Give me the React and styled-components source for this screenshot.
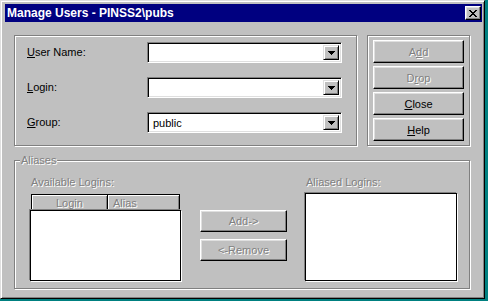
import React from 'react';
import styled, { createGlobalStyle } from 'styled-components';

const GlobalStyle = createGlobalStyle`
  body {
    margin: 0;
    background: #008080;
    font-family: "Liberation Sans", Arial, sans-serif;
    font-size: 11px;
  }
`;

const Window = styled.div`
  box-sizing: border-box;
  width: 485px;
  height: 299px;
  background: #c0c0c0;
  border: 1px solid;
  border-color: #dfdfdf #000 #000 #dfdfdf;
  box-shadow: inset 1px 1px #fff, inset -1px -1px #808080;
  padding: 3px 2px 2px 4px;
  display: flex;
  flex-direction: column;
`;

const TitleBar = styled.div`
  height: 18px;
  background: #000080;
  display: flex;
  align-items: center;
  justify-content: space-between;
  padding: 0 1px 0 2px;
`;

const Title = styled.span`
  color: #fff;
  font-weight: bold;
  font-size: 12px;
  white-space: nowrap;
`;

const CloseBox = styled.div`
  box-sizing: border-box;
  width: 16px;
  height: 14px;
  background: #c0c0c0;
  border: 1px solid;
  border-color: #fff #000 #000 #fff;
  box-shadow: inset -1px -1px #808080, inset 1px 1px #dfdfdf;
  display: flex;
  align-items: center;
  justify-content: center;
`;

const Client = styled.div`
  padding: 13px 0 0 9px;
  display: flex;
  flex-direction: column;
`;

const TopRow = styled.div`
  display: flex;
  gap: 10px;
`;

const Etched = styled.div`
  box-sizing: border-box;
  border: 1px solid #808080;
  box-shadow: inset 1px 1px #fff, 1px 1px #fff;
`;

const FieldsBox = styled(Etched)`
  width: 343px;
  height: 111px;
  padding: 6px 14px 0 12px;
  display: flex;
  flex-direction: column;
  gap: 14px;
`;

const FieldRow = styled.div`
  display: grid;
  grid-template-columns: 120px 195px;
  align-items: center;
  height: 21px;
`;

const Label = styled.span`
  color: ${(p) => (p.disabled ? '#808080' : '#000')};
  text-shadow: ${(p) => (p.disabled ? '1px 1px #fff' : 'none')};
  line-height: 13px;
  white-space: nowrap;
`;

const Combo = styled.div`
  box-sizing: border-box;
  height: 21px;
  background: #fff;
  border: 1px solid;
  border-color: #808080 #fff #fff #808080;
  box-shadow: inset 1px 1px #000, inset -1px -1px #dfdfdf;
  padding: 2px;
  display: flex;
  align-items: stretch;
`;

const ComboText = styled.span`
  flex: 1;
  padding-left: 3px;
  line-height: 17px;
`;

const DropButton = styled.div`
  box-sizing: border-box;
  width: 16px;
  background: #c0c0c0;
  border: 1px solid;
  border-color: #dfdfdf #000 #000 #dfdfdf;
  box-shadow: inset 1px 1px #fff, inset -1px -1px #808080;
  display: flex;
  align-items: center;
  justify-content: center;
`;

const ButtonsBox = styled(Etched)`
  width: 103px;
  height: 111px;
  padding-top: 4px;
  display: flex;
  flex-direction: column;
  align-items: center;
  gap: 3px;
`;

const PushButton = styled.div`
  box-sizing: border-box;
  width: ${(p) => p.$w}px;
  height: ${(p) => p.$h}px;
  background: #c0c0c0;
  border: 1px solid;
  border-color: #fff #000 #000 #fff;
  box-shadow: inset -1px -1px #808080, inset 1px 1px #dfdfdf;
  display: flex;
  align-items: center;
  justify-content: center;
  color: ${(p) => (p.$disabled ? '#808080' : '#000')};
  text-shadow: ${(p) => (p.$disabled ? '1px 1px #fff' : 'none')};
  white-space: nowrap;
`;

const AliasesBox = styled(Etched)`
  position: relative;
  margin-top: 14px;
  width: 456px;
  height: 129px;
  padding: 15px 0 0 15px;
  display: flex;
`;

const Legend = styled.span`
  position: absolute;
  top: -7px;
  left: 5px;
  padding: 0 1px;
  background: #c0c0c0;
  color: #808080;
  text-shadow: 1px 1px #fff;
  line-height: 13px;
`;

const Column = styled.div`
  width: ${(p) => p.$w}px;
  margin-left: ${(p) => p.$ml || 0}px;
  display: flex;
  flex-direction: column;
`;

const ColLabel = styled(Label)`
  padding-left: 1px;
`;

const MidColumn = styled.div`
  width: 87px;
  margin-left: 19px;
  padding-top: 34px;
  display: flex;
  flex-direction: column;
  gap: 7px;
`;

const Header = styled.div`
  display: flex;
  margin: 5px 1px 0;
  border: 1px solid #000;
  border-bottom: none;
  height: 15px;
`;

const HeaderCell = styled.div`
  box-sizing: border-box;
  width: ${(p) => p.$w}px;
  background: #c0c0c0;
  box-shadow: inset 1px 1px #fff, inset -1px -1px #808080;
  border-right: ${(p) => (p.$sep ? '1px solid #000' : 'none')};
  display: flex;
  align-items: center;
  justify-content: ${(p) => (p.$center ? 'center' : 'flex-start')};
  padding-left: ${(p) => (p.$center ? 0 : 5)}px;
  color: #808080;
  text-shadow: 1px 1px #fff;
`;

const ListBody = styled.div`
  box-sizing: border-box;
  height: ${(p) => p.$h}px;
  margin-top: ${(p) => p.$mt || 0}px;
  background: #fff;
  border: 1px solid #000;
  box-shadow: -1px -1px #808080, 1px 1px #fff;
`;

const CloseIcon = () => (
  <svg width="8" height="7" viewBox="0 0 8 7" shapeRendering="crispEdges">
    <path
      fill="#000"
      d="M0 0h2v1h-2zM6 0h2v1h-2zM1 1h2v1h-2zM5 1h2v1h-2zM2 2h4v1h-4zM3 3h2v1h-2zM2 4h4v1h-4zM1 5h2v1h-2zM5 5h2v1h-2zM0 6h2v1h-2zM6 6h2v1h-2z"
    />
  </svg>
);

const ArrowDown = () => (
  <svg width="7" height="4" viewBox="0 0 7 4" shapeRendering="crispEdges">
    <path fill="#000" d="M0 0H7V1H6V2H5V3H4V4H3V3H2V2H1V1H0Z" />
  </svg>
);

const Field = ({ label, value }) => (
  <FieldRow>
    <Label>
      <u>{label[0]}</u>
      {label.slice(1)}
    </Label>
    <Combo>
      <ComboText>{value}</ComboText>
      <DropButton>
        <ArrowDown />
      </DropButton>
    </Combo>
  </FieldRow>
);

const App = () => (
  <>
    <GlobalStyle />
    <Window>
      <TitleBar>
        <Title>Manage Users - PINSS2\pubs</Title>
        <CloseBox>
          <CloseIcon />
        </CloseBox>
      </TitleBar>
      <Client>
        <TopRow>
          <FieldsBox>
            <Field label="User Name:" value="" />
            <Field label="Login:" value="" />
            <Field label="Group:" value="public" />
          </FieldsBox>
          <ButtonsBox>
            <PushButton $w={91} $h={23} $disabled>
              A<u>d</u>d
            </PushButton>
            <PushButton $w={91} $h={23} $disabled>
              D<u>r</u>op
            </PushButton>
            <PushButton $w={91} $h={23}>
              <u>C</u>lose
            </PushButton>
            <PushButton $w={91} $h={23}>
              <u>H</u>elp
            </PushButton>
          </ButtonsBox>
        </TopRow>
        <AliasesBox>
          <Legend>Aliases</Legend>
          <Column $w={151}>
            <ColLabel disabled>Available Logins:</ColLabel>
            <Header>
              <HeaderCell $w={77} $sep $center>Login</HeaderCell>
              <HeaderCell $w={72}>Alias</HeaderCell>
            </Header>
            <ListBody $h={71} />
          </Column>
          <MidColumn>
            <PushButton $w={87} $h={22} $disabled>Add-&gt;</PushButton>
            <PushButton $w={87} $h={22} $disabled>&lt;-Remove</PushButton>
          </MidColumn>
          <Column $w={152} $ml={18}>
            <ColLabel disabled>Aliased Logins:</ColLabel>
            <ListBody $h={88} $mt={4} />
          </Column>
        </AliasesBox>
      </Client>
    </Window>
  </>
);

export default App;
